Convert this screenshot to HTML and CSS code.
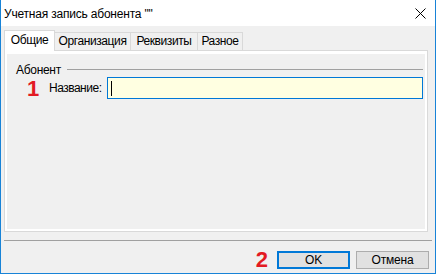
FILE: index.html
```html
<!DOCTYPE html>
<html lang="ru">
<head>
  <meta charset="UTF-8" />
  <title>Учетная запись абонента</title>
  <link rel="stylesheet" href="styles.css">
</head>
<body>
  <div class="window">
    <div class="titlebar">
      <span class="title">Учетная запись абонента ""</span>
      <svg class="close-icon" width="11" height="11" viewBox="0 0 11 11">
        <path d="M0.5 0.5 L10.5 10.5 M10.5 0.5 L0.5 10.5" stroke="#000" stroke-width="1" fill="none"/>
      </svg>
    </div>

    <div class="dialog-body">
      <div class="tabs">
        <div class="tab active tab-general">Общие</div>
        <div class="tab tab-org">Организация</div>
        <div class="tab tab-req">Реквизиты</div>
        <div class="tab tab-misc">Разное</div>
      </div>

      <div class="page">
        <div class="page-inner">
          <div class="group-head">
            <span class="group-title">Абонент</span>
            <span class="group-line"></span>
          </div>
          <div class="field-row">
            <span class="marker">1</span>
            <label class="field-label">Название:</label>
            <div class="text-input"><span class="caret"></span></div>
          </div>
        </div>
      </div>

      <div class="separator"></div>

      <div class="buttons">
        <span class="marker marker-btn">2</span>
        <button class="btn btn-default">OK</button>
        <button class="btn">Отмена</button>
      </div>
    </div>
  </div>
</body>
</html>
```

FILE: styles.css
```css
* {
  margin: 0;
  padding: 0;
  box-sizing: border-box;
}

body {
  font-family: 'Liberation Sans', Arial, sans-serif;
  font-size: 11px;
  color: #000;
  background: #f0f0f0;
}

.window {
  width: 436px;
  height: 274px;
  border: 1px solid #1883d7;
  border-top: none;
  background: #f0f0f0;
  overflow: hidden;
}

.titlebar {
  height: 26px;
  background: #fff;
  display: flex;
  align-items: center;
  justify-content: space-between;
  padding: 0 9px 0 3px;
}

.title {
  font-size: 12px;
  letter-spacing: -0.2px;
  padding-top: 2px;
}

.close-icon {
  display: block;
  margin-top: 1px;
}

.dialog-body {
  padding: 4px 0 0 3px;
}

/* tabs */
.tabs {
  display: flex;
  align-items: flex-end;
  height: 20px;
  position: relative;
  z-index: 1;
}

.tab {
  height: 18px;
  border: 1px solid #d9d9d9;
  border-bottom: none;
  margin-left: -1px;
  background: #f0f0f0;
  text-align: center;
  line-height: 17px;
  font-size: 12px;
  letter-spacing: -0.4px;
  white-space: nowrap;
}

.tab.active {
  height: 21px;
  margin-left: 0;
  margin-bottom: -1px;
  background: #fff;
  line-height: 19px;
  position: relative;
  z-index: 2;
}

.tab-general { width: 51px; }
.tab-org { width: 77px; }
.tab-req { width: 68px; }
.tab-misc { width: 46px; }

/* page */
.page {
  width: 424px;
  height: 182px;
  border: 1px solid #d9d9d9;
  background: #fff;
  padding: 3px 2px 2px 2px;
}

.page-inner {
  height: 100%;
  background: #f0f0f0;
  padding: 9px 2px 0 9px;
}

.group-head {
  display: flex;
  align-items: center;
  height: 14px;
}

.group-title {
  font-size: 12px;
  letter-spacing: -0.3px;
  margin-right: 6px;
  line-height: 14px;
}

.group-line {
  flex: 1;
  height: 1px;
  background: #a0a0a0;
  margin-top: -1px;
}

.field-row {
  display: flex;
  align-items: center;
  height: 22px;
  margin-left: 10px;
}

.marker {
  color: #e31b23;
  font-weight: bold;
  font-size: 22px;
  line-height: 22px;
}

.field-row .marker {
  width: 23px;
  padding-left: 1px;
  padding-top: 2px;
}

.field-label {
  width: 58px;
  font-size: 12px;
  letter-spacing: -0.5px;
}

.text-input {
  flex: 1;
  height: 22px;
  border: 1px solid #0078d7;
  background: #ffffe1;
  padding: 3px 0 0 3px;
}

.caret {
  display: block;
  width: 1px;
  height: 15px;
  background: #000;
}

.separator {
  width: 428px;
  height: 1px;
  background: #a0a0a0;
  margin-top: 8px;
}

.buttons {
  display: flex;
  justify-content: flex-end;
  align-items: center;
  margin-top: 8px;
  padding-right: 6px;
}

.marker-btn {
  margin-right: 9px;
}

.btn {
  width: 73px;
  height: 18px;
  font-family: 'Liberation Sans', Arial, sans-serif;
  font-size: 12px;
  letter-spacing: -0.2px;
  color: #000;
  background: #e1e1e1;
  border: 1px solid #adadad;
  margin-left: 6px;
}

.btn-default {
  border: 2px solid #0078d7;
  margin-left: 0;
}
```
